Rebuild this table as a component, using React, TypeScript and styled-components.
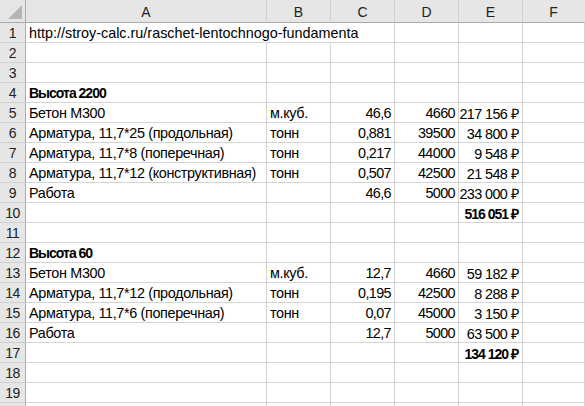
import React from "react";
import styled, { createGlobalStyle } from "styled-components";

const Global = createGlobalStyle`
  html, body { margin: 0; padding: 0; background: #fff; }
  body { font-family: "Liberation Sans", Arial, sans-serif; overflow: hidden; }
`;

const Sheet = styled.div`
  display: grid;
  grid-template-columns: 26px 241px 64px 64px 64px 64px 1fr;
  grid-auto-rows: 20px;
  grid-template-rows: 23px;
  width: 585px;
  height: 406px;
  overflow: hidden;
  font-size: 14.4px;
  color: #000;
`;

const Corner = styled.div`
  background: #e6e6e6;
  border-right: 1px solid #ababab;
  border-bottom: 1px solid #ababab;
  box-sizing: border-box;
  position: relative;
  &::after {
    content: "";
    position: absolute;
    right: 3px;
    bottom: 3px;
    width: 0;
    height: 0;
    border-left: 14px solid transparent;
    border-bottom: 14px solid #b5b5b5;
  }
`;

const ColHead = styled.div<{ $last?: boolean }>`
  background: #e6e6e6;
  border-bottom: 1px solid #ababab;
  border-right: 1px solid ${(p) => (p.$last ? "transparent" : "#d0d0d0")};
  box-sizing: border-box;
  display: flex;
  align-items: center;
  justify-content: center;
  color: #222;
  font-size: 14px;
  padding-top: 2px;
`;

const RowHead = styled.div`
  background: #e6e6e6;
  border-right: 1px solid #ababab;
  border-bottom: 1px solid #d0d0d0;
  box-sizing: border-box;
  display: flex;
  align-items: center;
  justify-content: center;
  color: #222;
  font-size: 14px;
  letter-spacing: -0.5px;
  padding-top: 1px;
`;

type Kind = "url" | "text" | "num" | "money";

const spacing = (k: Kind, bold?: boolean) => {
  if (k === "url") return "0px";
  if (bold) return "-1px";
  if (k === "num" || k === "money") return "-0.6px";
  return "-0.35px";
};

const Cell = styled.div<{ $kind: Kind; $bold?: boolean; $overflow?: boolean }>`
  border-right: 1px solid ${(p) => (p.$overflow ? "transparent" : "#d4d4d4")};
  border-bottom: 1px solid #d4d4d4;
  box-sizing: border-box;
  display: flex;
  align-items: center;
  justify-content: ${(p) => (p.$kind === "num" || p.$kind === "money" ? "flex-end" : "flex-start")};
  padding: 1px ${(p) => (p.$kind === "money" ? "4px" : "3px")} 0 3px;
  white-space: nowrap;
  overflow: visible;
  font-weight: ${(p) => (p.$bold ? 700 : 400)};
  font-size: ${(p) => (p.$bold ? "14px" : "14.4px")};
  letter-spacing: ${(p) => spacing(p.$kind, p.$bold)};
  position: relative;
  z-index: 1;
`;

type C = { t?: string; b?: boolean; r?: boolean };
type Row = C[];

const rows: Row[] = [
  [{ t: "http://stroy-calc.ru/raschet-lentochnogo-fundamenta" }],
  [],
  [],
  [{ t: "Высота 2200", b: true }],
  [{ t: "Бетон М300" }, { t: "м.куб." }, { t: "46,6", r: true }, { t: "4660", r: true }, { t: "217 156 ₽", r: true }],
  [{ t: "Арматура, 11,7*25 (продольная)" }, { t: "тонн" }, { t: "0,881", r: true }, { t: "39500", r: true }, { t: "34 800 ₽", r: true }],
  [{ t: "Арматура, 11,7*8 (поперечная)" }, { t: "тонн" }, { t: "0,217", r: true }, { t: "44000", r: true }, { t: "9 548 ₽", r: true }],
  [{ t: "Арматура, 11,7*12 (конструктивная)" }, { t: "тонн" }, { t: "0,507", r: true }, { t: "42500", r: true }, { t: "21 548 ₽", r: true }],
  [{ t: "Работа" }, {}, { t: "46,6", r: true }, { t: "5000", r: true }, { t: "233 000 ₽", r: true }],
  [{}, {}, {}, {}, { t: "516 051 ₽", r: true, b: true }],
  [],
  [{ t: "Высота 60", b: true }],
  [{ t: "Бетон М300" }, { t: "м.куб." }, { t: "12,7", r: true }, { t: "4660", r: true }, { t: "59 182 ₽", r: true }],
  [{ t: "Арматура, 11,7*12 (продольная)" }, { t: "тонн" }, { t: "0,195", r: true }, { t: "42500", r: true }, { t: "8 288 ₽", r: true }],
  [{ t: "Арматура, 11,7*6 (поперечная)" }, { t: "тонн" }, { t: "0,07", r: true }, { t: "45000", r: true }, { t: "3 150 ₽", r: true }],
  [{ t: "Работа" }, {}, { t: "12,7", r: true }, { t: "5000", r: true }, { t: "63 500 ₽", r: true }],
  [{}, {}, {}, {}, { t: "134 120 ₽", r: true, b: true }],
  [],
  [],
  [],
];

const cols = ["A", "B", "C", "D", "E", "F"];

export default function App() {
  return (
    <>
      <Global />
      <Sheet>
        <Corner />
        {cols.map((c, i) => (
          <ColHead key={c} $last={i === cols.length - 1}>{c}</ColHead>
        ))}
        {rows.map((row, ri) => (
          <React.Fragment key={ri}>
            <RowHead>{ri < 19 ? ri + 1 : ""}</RowHead>
            {cols.map((_, ci) => {
              const cell = row[ci] || {};
              const overflow = ri === 0 && ci <= 1;
              const kind: Kind =
                ri === 0 ? "url" : cell.r ? (cell.t && cell.t.includes("₽") ? "money" : "num") : "text";
              return (
                <Cell key={ci} $kind={kind} $bold={cell.b} $overflow={overflow}>
                  {cell.t}
                </Cell>
              );
            })}
          </React.Fragment>
        ))}
      </Sheet>
    </>
  );
}
